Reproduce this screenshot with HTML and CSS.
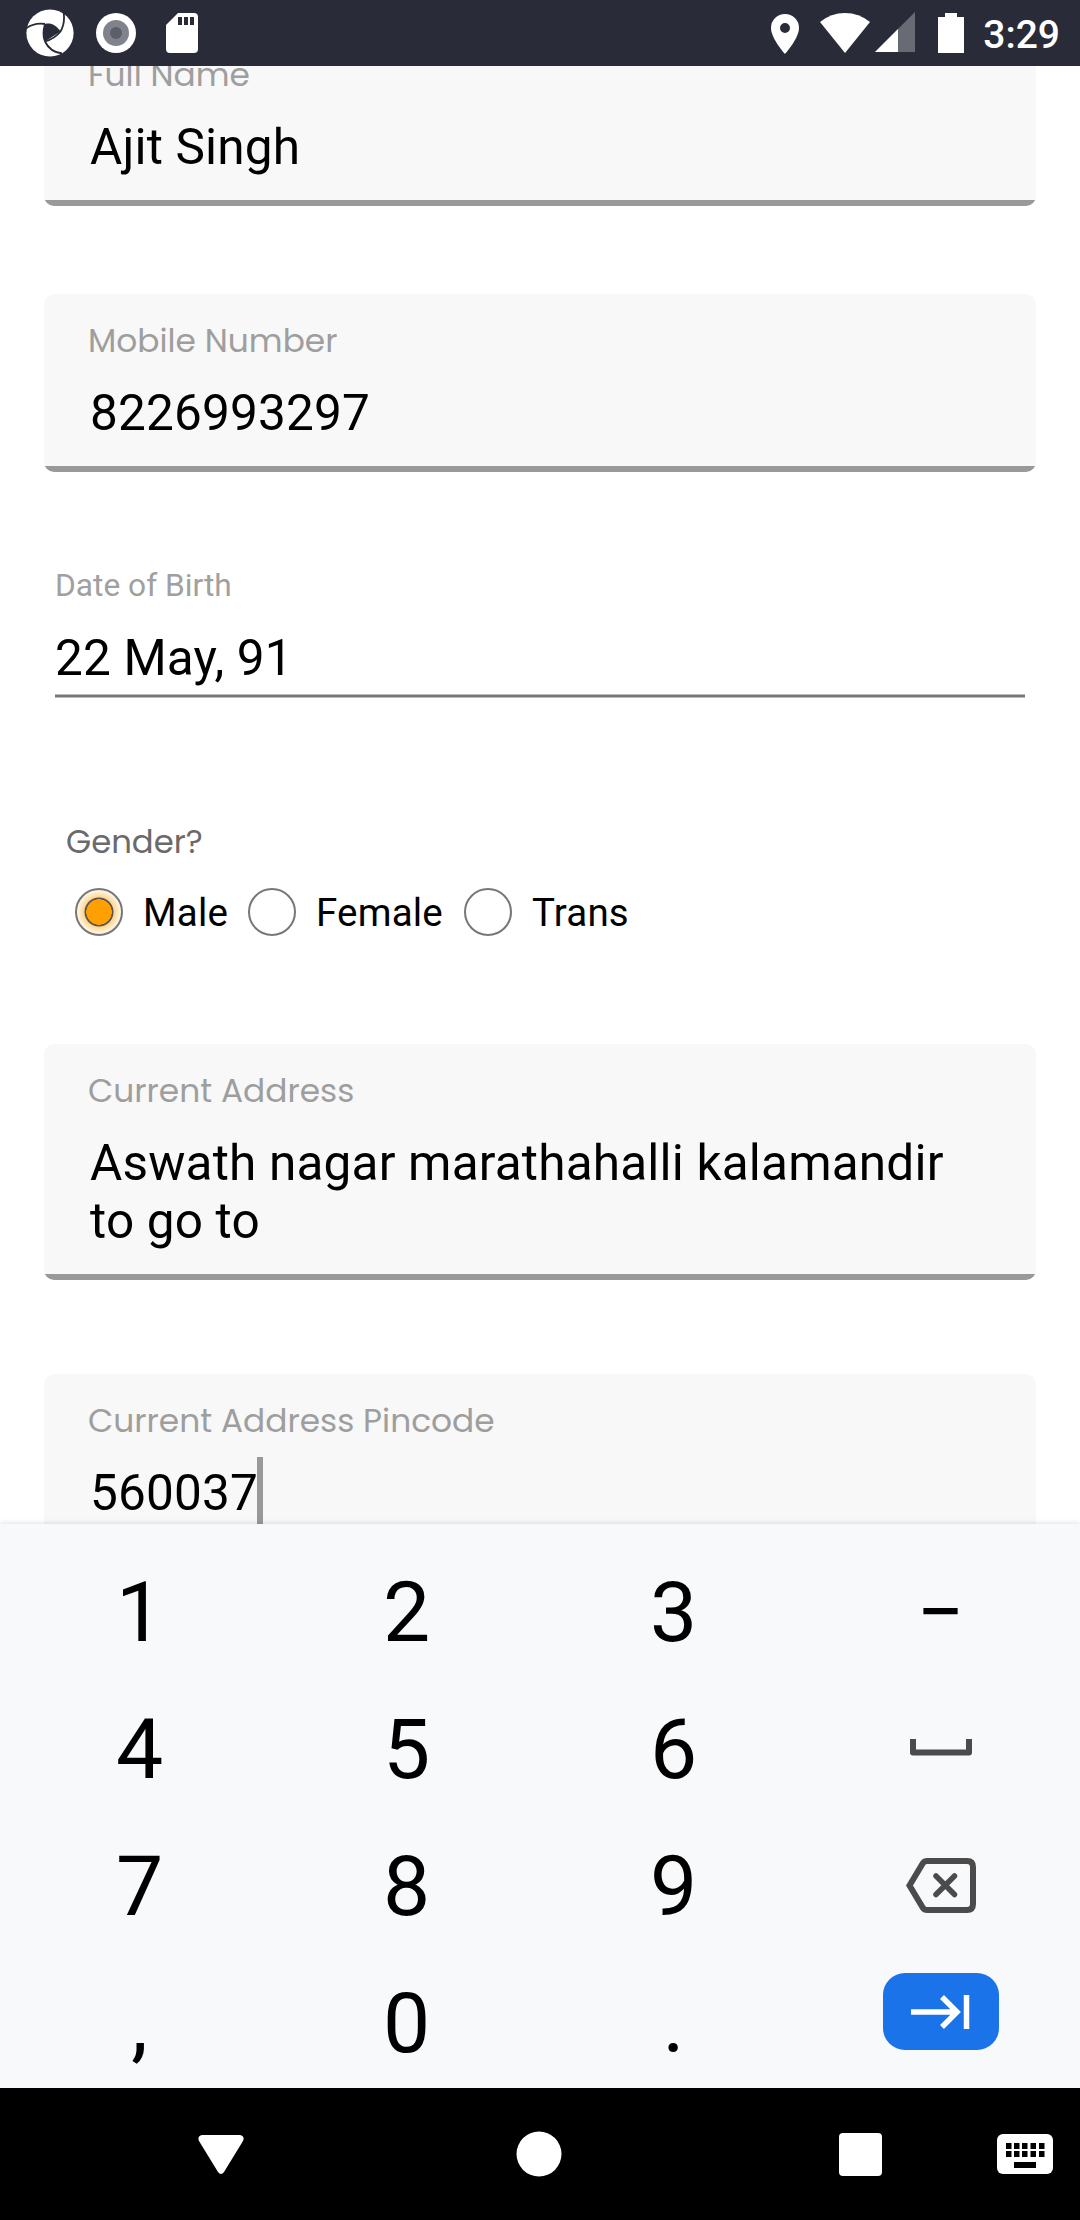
FILE: index.html
```html
<!DOCTYPE html>
<html lang="en">
<head>
<meta charset="utf-8">
<title>Personal details</title>
<link rel="stylesheet" href="styles.css">
</head>
<body>
<div class="screen">
  <header class="status">
    <div class="status-left">
      <svg class="ic-app" width="48" height="48" viewBox="0 0 48 48"><circle cx="24" cy="24" r="23.6" fill="#fff"/><path d="M19 15C24 13.500 30 15.500 34.500 22.500L19 32.500Q16.500 24 19 15Z" fill="#292c38"/><path d="M0 19.500Q8 13.500 19 15M37 0Q40 13 34.500 22.500M19 32.500Q24 43 36 44.500M34.500 22.500Q29 29.500 19 32.500M19 15Q16 25 19 32.500" fill="none" stroke="#292c38" stroke-width="1.800"/></svg>
      <svg class="ic-rec" width="40" height="40" viewBox="0 0 40 40"><circle cx="20" cy="20" r="20" fill="#fff"/><circle cx="20" cy="20" r="13" fill="#80838b"/><circle cx="20" cy="20" r="6" fill="#5c5f68"/></svg>
      <svg class="ic-sd" width="32" height="40" viewBox="0 0 32 40"><path d="M12 0H28Q32 0 32 4V36Q32 40 28 40H4Q0 40 0 36V12Z" fill="#fff"/><path d="M12 4h4v8h-4zM18 4h4v8h-4zM24 4h4v8h-4z" fill="#292c38"/></svg>
    </div>
    <div class="status-right">
      <svg class="ic-pin" width="28" height="40" viewBox="0 0 28 40"><path fill-rule="evenodd" d="M14 0A14 14 0 0 0 0 14C0 24.500 14 40 14 40S28 24.500 28 14A14 14 0 0 0 14 0ZM14 19A5 5 0 1 1 14 9A5 5 0 0 1 14 19Z" fill="#fff"/></svg>
      <svg class="ic-wifi" width="50" height="40" viewBox="0 0 50 40"><path d="M0 9Q11 0 25 0T50 9L25 40Z" fill="#fff"/></svg>
      <svg class="ic-cell" width="40" height="40" viewBox="0 0 40 40"><path d="M0 40L40 0V40Z" fill="#696b74"/><path d="M0 40L23 17V40Z" fill="#fff"/></svg>
      <svg class="ic-bat" width="26" height="40" viewBox="0 0 26 40"><path d="M0 4H7V0H19V4H26V40H0Z" fill="#fff"/></svg>
      <span class="clock">3:29</span>
    </div>
  </header>

  <main class="form">
    <section class="field first"><label class="hint">Full Name</label><div class="value">Ajit Singh</div></section>
    <section class="field mobile"><label class="hint">Mobile Number</label><div class="value">8226993297</div></section>
    <section class="dob"><label class="dob-label">Date of Birth</label><div class="dob-value">22 May, 91</div></section>
    <section class="gender">
      <div class="gender-title">Gender?</div>
      <div class="options">
        <div class="option male"><span class="radio on"></span><span class="option-text">Male</span></div>
        <div class="option female"><span class="radio"></span><span class="option-text">Female</span></div>
        <div class="option"><span class="radio"></span><span class="option-text">Trans</span></div>
      </div>
    </section>
    <section class="field address"><label class="hint">Current Address</label><div class="value">Aswath nagar marathahalli kalamandir<br>to go to</div></section>
    <section class="field pincode"><label class="hint">Current Address Pincode</label><div class="value editing">560037<span class="caret"></span></div></section>
  </main>

  <div class="keyboard">
    <div class="key">1</div><div class="key">2</div><div class="key">3</div><div class="key">−</div>
    <div class="key">4</div><div class="key">5</div><div class="key">6</div>
    <div class="key key-space"><svg width="62" height="17" viewBox="0 0 62 17"><path d="M3 3V13.500H59V3" fill="none" stroke="#4b4b4b" stroke-width="6" stroke-linejoin="round" stroke-linecap="square"/></svg></div>
    <div class="key">7</div><div class="key">8</div><div class="key">9</div>
    <div class="key key-delete"><svg width="70" height="55" viewBox="0 0 70 55"><path d="M21 3H61Q67 3 67 9V46Q67 52 61 52H21Q18.500 52 17 50L3.500 27.500L17 5Q18.500 3 21 3Z" fill="none" stroke="#4b4b4b" stroke-width="6"/><path d="M30 18L48.500 36.500M48.500 18L30 36.500" stroke="#4b4b4b" stroke-width="5.500" stroke-linecap="round"/></svg></div>
    <div class="key">,</div><div class="key">0</div><div class="key">.</div>
    <div class="key key-next"><div class="next"><svg width="59" height="34" viewBox="0 0 59 34"><path d="M0 17H46M31 2L46 17L31 32M55.500 0V34" fill="none" stroke="#fff" stroke-width="5.500"/></svg></div></div>
  </div>

  <nav class="navbar">
    <svg class="nav-back" width="46" height="40" viewBox="0 0 46 40"><path d="M4 0H42Q47 1 45 6L26 37Q23 41 20 37L1 6Q-1 1 4 0Z" fill="#fff"/></svg>
    <svg class="nav-home" width="46" height="46" viewBox="0 0 46 46"><circle cx="23" cy="23" r="22.500" fill="#fff"/></svg>
    <svg class="nav-recent" width="43" height="43" viewBox="0 0 43 43"><rect width="43" height="43" rx="4" fill="#fff"/></svg>
    <svg class="nav-kbd" width="56" height="40" viewBox="0 0 56 40"><rect width="56" height="40" rx="6" fill="#fff"/><path d="M9 9h5.500v6h-5.500zM17 9h5.500v6h-5.500zM25 9h5.500v6h-5.500zM33.500 9h5.500v6h-5.500zM42 9h5.500v6h-5.500zM9 17h5.500v6h-5.500zM17 17h5.500v6h-5.500zM25 17h5.500v6h-5.500zM33.500 17h5.500v6h-5.500zM42 17h5.500v6h-5.500zM17 28h22v6h-22z" fill="#000"/></svg>
  </nav>
</div>
</body>
</html>
```
FILE: styles.css
```css
* { box-sizing: border-box; }
body { margin: 0; background: #fff; font-family: Roboto, "Noto Sans", sans-serif; color: #000; }
svg { display: block; flex: none; }
.screen { width: 1080px; height: 2220px; display: flex; flex-direction: column; overflow: hidden; }

.status { height: 66px; flex: none; background: #292c38; display: flex; justify-content: space-between; z-index: 1; }
.status-left, .status-right { display: flex; align-items: flex-start; }
.status-left { padding: 9px 0 0 26px; }
.ic-rec { margin: 4px 0 0 22px; }
.ic-sd { margin: 4px 0 0 30px; }
.status-right { padding: 13px 20px 0 0; }
.ic-pin { margin-top: 1px; }
.ic-wifi { margin-left: 21px; }
.ic-cell { margin: -1px 0 0 5px; }
.ic-bat { margin-left: 23px; }
.clock { margin-left: 19px; font-size: 39px; line-height: 44px; font-weight: 500; color: #fff; }

.form { height: 1458px; flex: none; overflow: hidden; padding: 0 44px; }
.field { height: 178px; border-radius: 10px; background: linear-gradient(to top, #999 6px, #f8f8f8 6px); padding: 25px 44px 0 46px; }
.hint { display: block; height: 44px; margin-left: -2px; font-family: Poppins, Inter, sans-serif; font-weight: 400; font-size: 32.85px; line-height: 44px; color: #9e9e9e; white-space: nowrap; }
.value { margin-top: 21px; font-size: 49.5px; line-height: 58px; letter-spacing: .18px; white-space: nowrap; }
.first { margin-top: -38px; }
.mobile { margin-top: 88px; }

.dob { margin: 92px 11px 0; height: 134px; border-bottom: 1px solid #bbb; box-shadow: inset 0 -2px #777, inset 0 -3px #bbb; }
.dob-label { display: block; padding-top: 1px; font-size: 31.7px; line-height: 42px; color: #a0a0a0; }
.dob-value { margin-top: 22px; font-size: 49.5px; line-height: 58px; letter-spacing: .16px; }

.gender { margin: 122px 0 0; height: 224px; }
.gender-title { padding-left: 22px; font-family: Poppins, Inter, sans-serif; font-size: 32.3px; line-height: 44px; color: #6a6a6a; }
.options { display: flex; padding-left: 31px; margin-top: 23px; }
.option { display: flex; align-items: center; gap: 20px; font-size: 38.5px; line-height: 48px; letter-spacing: .2px; }
.option-text { padding-top: 2px; }
.male { width: 173px; }
.female { width: 216px; }
.radio { width: 48px; height: 48px; flex: none; border: 2px solid #777; border-radius: 50%; }
.on { background: radial-gradient(circle, #ff9f00 12.5px, #555 13px, #555 14px, #ffd592 15px, #fff4df 21px); }

.address { height: 236px; margin-top: 0; }
.pincode { margin-top: 94px; }
.editing { display: flex; }
.caret { width: 6px; height: 80px; margin: -7px 0 0 -1px; background: #999; }

.keyboard { height: 564px; flex: none; background: #f8f9fb; padding: 20px 6px 0; display: grid; grid-template-columns: repeat(4, 267px); grid-auto-rows: 137px; box-shadow: 0 -1px 5px rgba(0,0,0,.12); z-index: 1; }
.key { display: flex; align-items: center; justify-content: center; font-size: 84px; line-height: 137px; }
.key-space { padding: 0 0 4px 1px; }
.key-delete { padding-bottom: 2px; }
.key-next { padding-bottom: 24px; }
.next { width: 116px; height: 77px; border-radius: 22px; background: #1a73e8; display: flex; align-items: center; justify-content: center; }

.navbar { height: 132px; flex: none; background: #000; display: flex; align-items: flex-start; padding-left: 198px; }
.nav-back { margin-top: 47px; }
.nav-home { margin: 43px 0 0 272px; }
.nav-recent { margin: 45px 0 0 277px; }
.nav-kbd { margin: 46px 0 0 115px; }
```
